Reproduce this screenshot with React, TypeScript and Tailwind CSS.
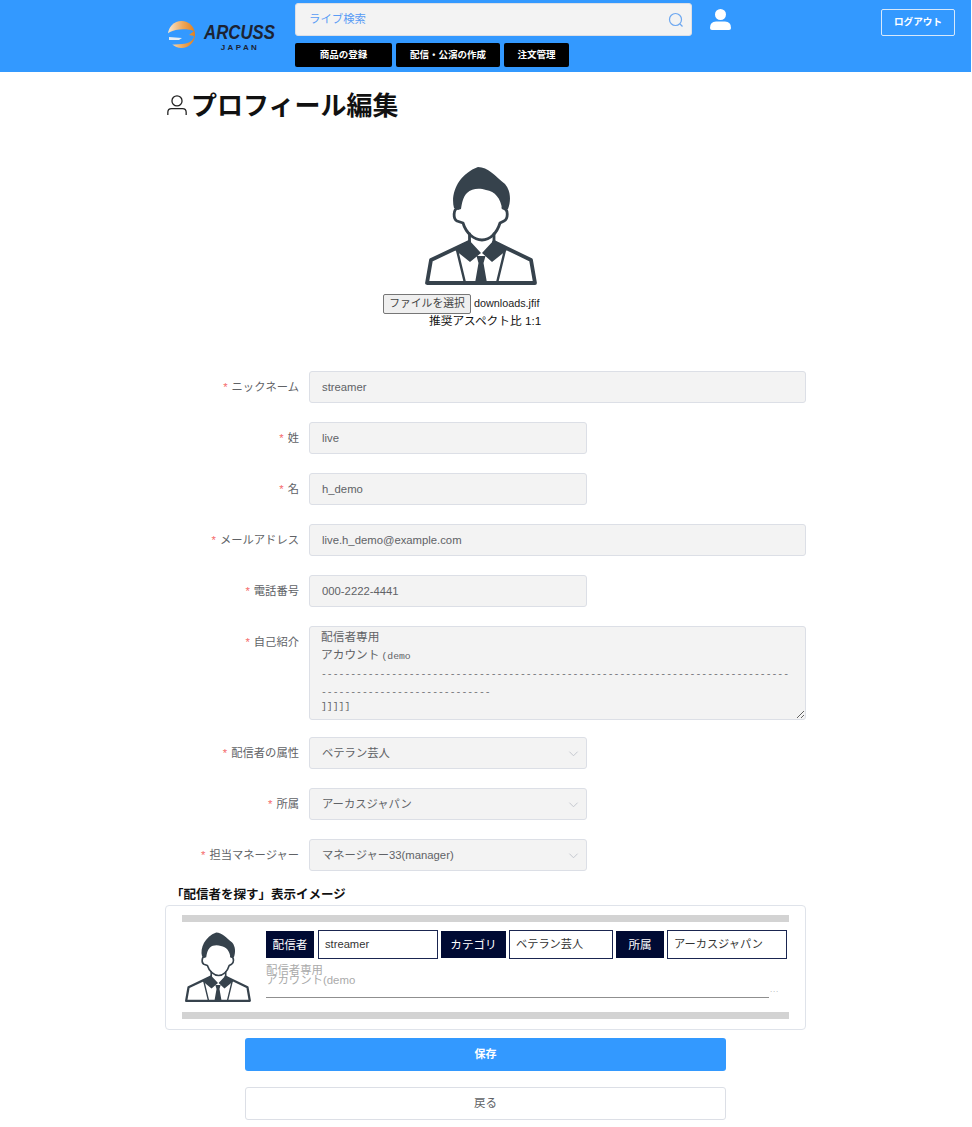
import React from "react";

const sans = "font-['Liberation_Sans','Noto_Sans_CJK_JP',sans-serif]";

function Avatar({ className }: { className?: string }) {
  return (
    <svg viewBox="5 4 112 119" className={className}>
      <path fill="#36424c" d="M34 45 C30 30 39 11 58 4 C68 4 75 13 85 21 C91 28 91 38 88 46 L82 46 C81 36 75 28 66 27 C60 25 52 25 47 30 C43 34 42 40 41 46 L38 47Z" />
      <g fill="none" stroke="#36424c" strokeLinejoin="round" strokeLinecap="round">
        <path strokeWidth="2.8" d="M38 45 C33 46 33 56 37 58 L43 60 C46 70 54 77 62 77 C70 77 77 70 80 60 L84 58 C88 56 89 46 83 45" />
        <path strokeWidth="2.8" d="M49.5 71 L49.5 80 M74 71 L74 80" />
        <path strokeWidth="3.8" d="M49 79 L11 97 L7 120 L115 120 L111 97 L74 79" />
        <path strokeWidth="2.4" d="M37 87 L45 120 M85 87 L77 120" />
      </g>
      <path fill="#36424c" d="M49 77 L35 87 L50 99 L61 90Z M74 77 L87 87 L72 99 L62 90Z" />
      <path fill="#36424c" d="M56.5 93 L65.5 93 L63.5 100 L67 120 L55 120 L58.5 100Z" />
    </svg>
  );
}

function Label({ text }: { text: string }) {
  return (
    <div className="w-[134px] shrink-0 mr-[10px] h-[32px] flex items-center justify-end text-[11.3px] text-[#606266]">
      <span className="text-[#f56c6c] mr-[4px]">*</span>
      {text}
    </div>
  );
}

function Field({ label, value, wide }: { label: string; value: string; wide?: boolean }) {
  return (
    <div className="flex items-start mb-[19px]">
      <Label text={label} />
      <input
        readOnly
        value={value}
        className={`h-[32px] ${wide ? "w-[498px]" : "w-[278px]"} rounded-[3px] border border-[#dcdfe6] bg-[#f3f3f3] px-[12px] text-[11.3px] text-[#606266] outline-none`}
      />
    </div>
  );
}

function SelectField({ label, value, last }: { label: string; value: string; last?: boolean }) {
  return (
    <div className={`flex items-start ${last ? "" : "mb-[19px]"}`}>
      <Label text={label} />
      <div className="h-[32px] w-[278px] rounded-[3px] border border-[#dcdfe6] bg-[#f3f3f3] pl-[12px] pr-[7px] flex items-center justify-between text-[11.3px] text-[#606266]">
        <span>{value}</span>
        <svg viewBox="0 0 12 12" className="w-[11px] h-[11px]" fill="none" stroke="#c0c4cc" strokeWidth="1">
          <path d="M1.5 4 L6 8.5 L10.5 4" />
        </svg>
      </div>
    </div>
  );
}

function Tag({ text, w }: { text: string; w: string }) {
  return <div className={`${w} h-[27px] bg-[#000a33] text-white text-[11.6px] flex items-center justify-center`}>{text}</div>;
}

function Box({ text, w }: { text: string; w: string }) {
  return <div className={`${w} h-[29px] border border-[#1a2550] pl-[6px] flex items-center text-[11.2px] text-[#333]`}>{text}</div>;
}

export default function App() {
  return (
    <div className={`${sans} w-[971px] h-[1127px] overflow-hidden bg-white text-black`}>
      <header className="h-[72px] bg-[#3399ff] pl-[167px] pr-[16px] flex items-start">
        <div className="w-[128px] h-full flex items-start pt-[21px]">
          <svg viewBox="0 0 29 27" className="w-[29px] h-[27px] shrink-0">
            <defs>
              <linearGradient id="logo-arc" x1="0" y1="0" x2="1" y2="0">
                <stop offset="0" stopColor="#f7e8d2" />
                <stop offset="0.55" stopColor="#eda75a" />
                <stop offset="1" stopColor="#e07f1f" />
              </linearGradient>
            </defs>
            <circle cx="14.5" cy="13.5" r="13.5" fill="url(#logo-arc)" />
            <path fill="#3399ff" d="M3 11 C8 8 20 7 27 10 L22 14 L27 15 C27 19 22 23 15 23 L0 24 L0 13Z" />
            <path fill="#e6eef5" d="M2 16 L15 17 L12 19 L2 19Z" />
          </svg>
          <div className="ml-[8px] w-[72px] flex flex-col items-center">
            <span className="w-[72px] origin-left scale-x-[0.8] font-['Liberation_Sans'] italic font-bold text-[21px] text-[#1c2333] leading-[20px] mt-[1px] whitespace-nowrap">ARCUSS</span>
            <span className="font-['Liberation_Sans'] font-bold text-[8px] tracking-[2.4px] text-[#1c2333] leading-[9px] mt-[1px]">JAPAN</span>
          </div>
        </div>
        <div className="w-[397px] pt-[3px]">
          <div className="h-[33px] rounded-[3px] bg-[#f3f3f3] border border-[#dcdfe6] pl-[13px] pr-[7px] flex items-center justify-between text-[11.4px] text-[#5a9cf5]">
            <span>ライブ検索</span>
            <svg viewBox="0 0 16 16" className="w-[16px] h-[16px]" fill="none" stroke="#6ea8f0" strokeWidth="1.2">
              <circle cx="7.5" cy="7.5" r="6" />
              <path d="M12 12 L14.5 14.5" />
            </svg>
          </div>
          <nav className="flex gap-[4px] mt-[7px]">
            <div className="w-[97px] h-[24px] rounded-[2px] bg-black text-white text-[9.5px] font-bold flex items-center justify-center">商品の登録</div>
            <div className="w-[104px] h-[24px] rounded-[2px] bg-black text-white text-[9.5px] font-bold flex items-center justify-center">配信・公演の作成</div>
            <div className="w-[65px] h-[24px] rounded-[2px] bg-black text-white text-[9.5px] font-bold flex items-center justify-center">注文管理</div>
          </nav>
        </div>
        <svg viewBox="0 0 21 21" className="w-[21px] h-[21px] ml-[18px] mt-[9px]" fill="#fff">
          <circle cx="10.5" cy="5.5" r="5.5" />
          <path d="M0 19 Q0 12.5 6 12.5 L15 12.5 Q21 12.5 21 19 Q21 21 19 21 L2 21 Q0 21 0 19Z" />
        </svg>
        <div className="ml-auto mt-[9px] w-[74px] h-[27px] border border-[#d7e9fb] rounded-[2px] text-white text-[9.6px] font-bold flex items-center justify-center">ログアウト</div>
      </header>

      <main className="w-[641px] ml-[165px]">
        <div className="flex items-center h-[34px] mt-[17px]">
          <svg viewBox="0 0 24 24" className="w-[22px] h-[22px] ml-[1px] mr-[3px] -mt-[3px]" fill="none" stroke="#222" strokeWidth="1.4">
            <circle cx="12" cy="7.5" r="5.5" />
            <path d="M2 23 L2 20 Q2 16 6 16 L18 16 Q22 16 22 20 L22 23" />
          </svg>
          <h1 className="text-[26px] font-bold leading-none text-[#111]">プロフィール編集</h1>
        </div>

        <div className="flex flex-col items-center mt-[44px] h-[162px]">
          <Avatar className="w-[112px] h-[119px] -ml-[9px]" />
          <div className="flex items-center self-start ml-[218px] mt-[7px] h-[21px]">
            <div className="w-[88px] h-[20px] bg-[#efefef] border border-[#767676] rounded-[2px] text-[10.8px] text-[#444] flex items-center justify-center">ファイルを選択</div>
            <span className="ml-[3px] text-[10.8px] text-[#222]">downloads.jfif</span>
          </div>
          <div className="self-start ml-[264px] text-[11.7px] leading-[14px] text-[#111]">推奨アスペクト比 1:1</div>
        </div>

        <div className="mt-[42px]">
          <Field label="ニックネーム" value="streamer" wide />
          <Field label="姓" value="live" />
          <Field label="名" value="h_demo" />
          <Field label="メールアドレス" value="live.h_demo@example.com" wide />
          <Field label="電話番号" value="000-2222-4441" />
          <div className="flex items-start mb-[17px]">
            <Label text="自己紹介" />
            <div className="h-[94px] w-[498px] resize overflow-hidden rounded-[3px] border border-[#dcdfe6] bg-[#f3f3f3] pl-[11px] pt-[3px] text-[#606266] font-['Liberation_Mono','Noto_Sans_CJK_JP',monospace] leading-[17.5px] whitespace-pre">
              <div className="text-[11.7px]">配信者専用</div>
              <div className="text-[11.7px]">アカウント<span className="ml-[2px] text-[9.75px]">(demo</span></div>
              <div className="text-[9.75px] mt-[1px]">{"-".repeat(80)}</div>
              <div className="text-[9.75px]">{"-".repeat(29)}</div>
              <div className="text-[9.75px] leading-[11px]">]]]]]</div>
            </div>
          </div>
          <SelectField label="配信者の属性" value="ベテラン芸人" />
          <SelectField label="所属" value="アーカスジャパン" />
          <SelectField label="担当マネージャー" value="マネージャー33(manager)" last />
        </div>

        <div className="ml-[6px] mt-[15px] h-[18px] text-[12.5px] font-bold leading-[18px] text-[#111]">「配信者を探す」表示イメージ</div>
        <section className="mt-[1px] h-[125px] border border-[#dfe3ea] rounded-[4px] px-[16px] pt-[9px]">
          <div className="h-[7px] w-[607px] bg-[#d3d3d3]" />
          <div className="flex h-[90px] items-start">
            <Avatar className="w-[66px] h-[71px] ml-[3px] mt-[10px] shrink-0" />
            <div className="ml-[15px] pt-[8px]">
              <div className="flex items-center">
                <Tag text="配信者" w="w-[48px]" />
                <div className="w-[4px]" />
                <Box text="streamer" w="w-[120px]" />
                <div className="w-[3px]" />
                <Tag text="カテゴリ" w="w-[65px]" />
                <div className="w-[3px]" />
                <Box text="ベテラン芸人" w="w-[104px]" />
                <div className="w-[3px]" />
                <Tag text="所属" w="w-[48px]" />
                <div className="w-[3px]" />
                <Box text="アーカスジャパン" w="w-[120px]" />
              </div>
              <div className="text-[11.4px] leading-[10px] text-[#aaaaaa] mt-[6px]">
                <div>配信者専用</div>
                <div>アカウント(demo</div>
              </div>
              <div className="flex items-end mt-[3px] h-[10px]">
                <div className="w-[503px] h-[1px] bg-[#8f8f8f]" />
                <span className="text-[8px] leading-[8px] tracking-[0.8px] text-[#aaaaaa] ml-[1px] mb-[4px]">...</span>
              </div>
            </div>
          </div>
          <div className="h-[7px] w-[607px] bg-[#d3d3d3]" />
        </section>

        <div className="w-[481px] ml-[80px] mt-[8px] h-[33px] bg-[#3399ff] rounded-[3px] text-white text-[11px] font-bold flex items-center justify-center">保存</div>
        <div className="w-[481px] ml-[80px] mt-[16px] h-[33px] bg-white border border-[#dcdfe6] rounded-[3px] text-[#606266] text-[11.5px] flex items-center justify-center">戻る</div>
      </main>
    </div>
  );
}
